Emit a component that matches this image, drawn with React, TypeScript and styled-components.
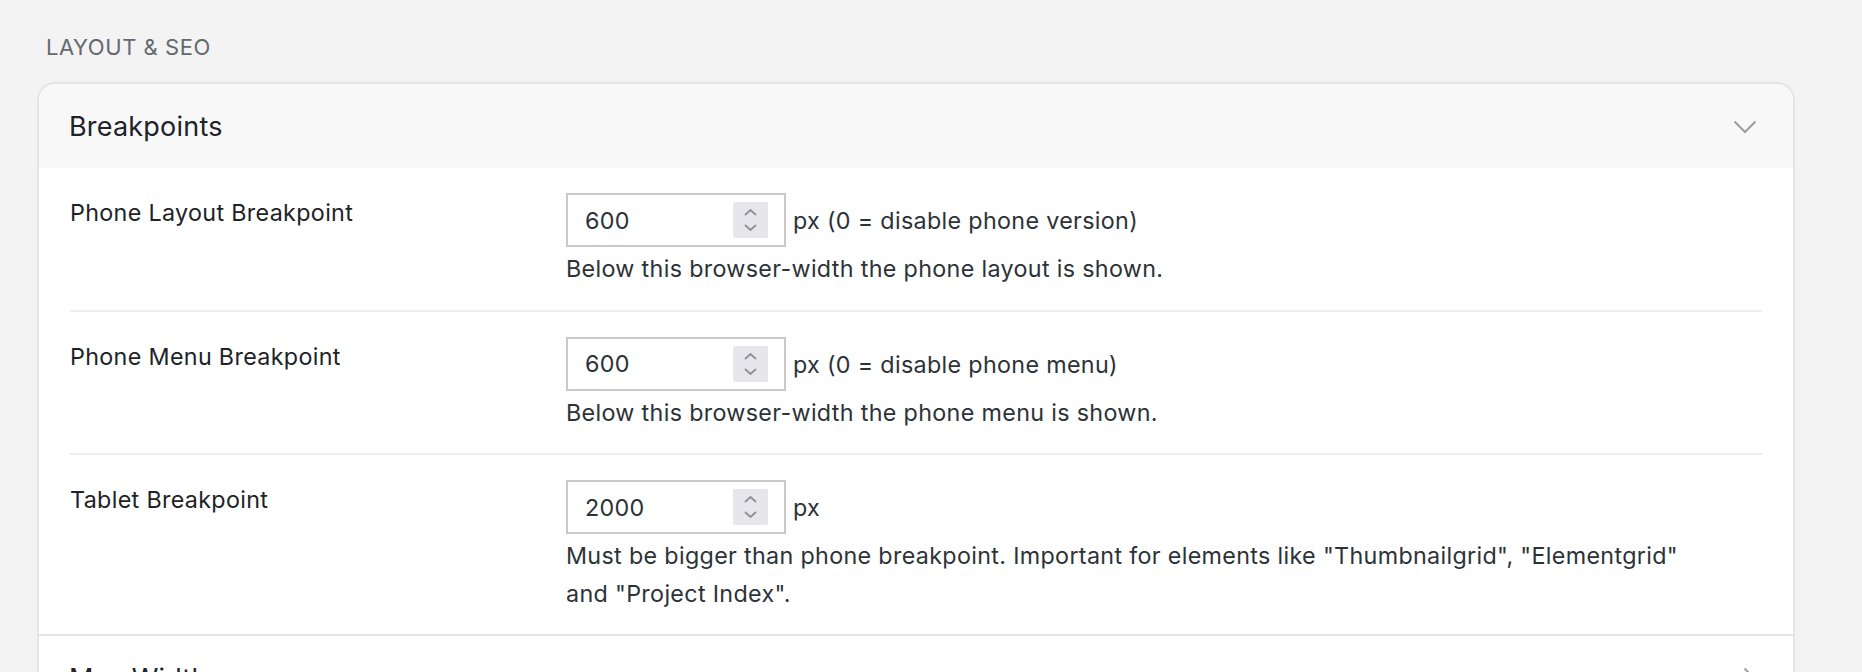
import React from "react";
import styled, { createGlobalStyle } from "styled-components";

const GlobalStyle = createGlobalStyle`
  html, body {
    margin: 0;
    padding: 0;
    background: #f3f3f3;
  }
  body {
    font-family: Inter, "Noto Sans", sans-serif;
    -webkit-font-smoothing: antialiased;
  }
`;

const Page = styled.div`
  box-sizing: border-box;
  height: 672px;
  overflow: hidden;
  padding: 36px 67px 0 37px;
`;

const SectionTitle = styled.h2`
  margin: 0 0 24px;
  padding-left: 9px;
  font-size: 22px;
  line-height: 22px;
  font-weight: 400;
  letter-spacing: 0.55px;
  text-transform: uppercase;
  color: #646970;
`;

const Card = styled.div`
  background: #ffffff;
  border: 2px solid #e4e4e4;
  border-radius: 18px;
  overflow: hidden;
`;

const Item = styled.section`
  & + & {
    border-top: 2px solid #e4e4e4;
  }
`;

const Header = styled.div<{ $open: boolean }>`
  display: flex;
  align-items: center;
  justify-content: space-between;
  height: 84px;
  padding: 1px 36px 0 30px;
  box-sizing: border-box;
  background: ${(p) => (p.$open ? "#f8f8f8" : "#ffffff")};
  cursor: pointer;
`;

const HeaderTitle = styled.h3`
  margin: 0;
  font-size: 27px;
  font-weight: 400;
  letter-spacing: 0.2px;
  color: #1d2327;
`;

const Body = styled.div`
  padding: 0 31px;
`;

const Row = styled.div`
  display: grid;
  grid-template-columns: 496px 1fr;
  padding: 25px 0 22px;
  border-bottom: 2px solid #eeeeee;
  &:last-child {
    border-bottom: none;
  }
`;

const Label = styled.div`
  padding-top: 1px;
  font-size: 23.3px;
  line-height: 37.5px;
  letter-spacing: 0.33px;
  color: #1d2327;
`;

const Field = styled.div`
  display: flex;
  flex-direction: column;
`;

const InputLine = styled.div`
  display: flex;
  align-items: center;
  gap: 7px;
`;

const InputBox = styled.label`
  box-sizing: border-box;
  width: 220px;
  height: 54px;
  display: flex;
  align-items: center;
  padding: 0 16px 0 17px;
  border: 2px solid #c9c9c9;
  background: #ffffff;
`;

const NumberInput = styled.input`
  flex: 1;
  min-width: 0;
  border: none;
  outline: none;
  padding: 0;
  background: transparent;
  font-family: inherit;
  font-size: 23.3px;
  letter-spacing: 0.33px;
  color: #2c3338;
  -moz-appearance: textfield;
  &::-webkit-inner-spin-button,
  &::-webkit-outer-spin-button {
    -webkit-appearance: none;
    margin: 0;
  }
`;

const Spinner = styled.span`
  width: 35px;
  height: 36px;
  display: flex;
  flex-direction: column;
  align-items: center;
  justify-content: center;
  gap: 8px;
  background: #e7e6eb;
  border-radius: 2px;
  color: #8f8d9a;
`;

const Unit = styled.span`
  padding-top: 2px;
  font-size: 23.3px;
  line-height: 37.5px;
  letter-spacing: 0.33px;
  color: #2c3338;
`;

const Description = styled.p`
  margin: 3px 0 0;
  max-width: 1140px;
  font-size: 23.3px;
  line-height: 37.5px;
  letter-spacing: 0.33px;
  color: #2c3338;
`;

const Chevron = ({ dir }: { dir: "down" | "right" }) =>
  dir === "down" ? (
    <svg width="24" height="14" viewBox="0 0 24 14" fill="none">
      <path d="M1.5 1.5 L12 12 L22.5 1.5" stroke="#9d9d9d" strokeWidth="2" />
    </svg>
  ) : (
    <svg width="14" height="24" viewBox="0 0 14 24" fill="none">
      <path d="M1.5 1.5 L12 12 L1.5 22.5" stroke="#9d9d9d" strokeWidth="2" />
    </svg>
  );

const SpinArrow = ({ up }: { up?: boolean }) => (
  <svg width="13" height="7" viewBox="0 0 13 7" fill="none">
    <path
      d={up ? "M1 6 L6.5 1 L12 6" : "M1 1 L6.5 6 L12 1"}
      stroke="currentColor"
      strokeWidth="1.8"
    />
  </svg>
);

type Setting = {
  label: string;
  value: number;
  unit: string;
  help: string;
};

const settings: Setting[] = [
  {
    label: "Phone Layout Breakpoint",
    value: 600,
    unit: "px (0 = disable phone version)",
    help: "Below this browser-width the phone layout is shown.",
  },
  {
    label: "Phone Menu Breakpoint",
    value: 600,
    unit: "px (0 = disable phone menu)",
    help: "Below this browser-width the phone menu is shown.",
  },
  {
    label: "Tablet Breakpoint",
    value: 2000,
    unit: "px",
    help:
      'Must be bigger than phone breakpoint. Important for elements like "Thumbnailgrid", "Elementgrid" and "Project Index".',
  },
];

const SettingRow = ({ s }: { s: Setting }) => (
  <Row>
    <Label>{s.label}</Label>
    <Field>
      <InputLine>
        <InputBox>
          <NumberInput type="number" defaultValue={s.value} />
          <Spinner>
            <SpinArrow up />
            <SpinArrow />
          </Spinner>
        </InputBox>
        <Unit>{s.unit}</Unit>
      </InputLine>
      <Description>{s.help}</Description>
    </Field>
  </Row>
);

export default function App() {
  return (
    <>
      <GlobalStyle />
      <Page>
        <SectionTitle>Layout &amp; SEO</SectionTitle>
        <Card>
          <Item>
            <Header $open>
              <HeaderTitle>Breakpoints</HeaderTitle>
              <Chevron dir="down" />
            </Header>
            <Body>
              {settings.map((s) => (
                <SettingRow key={s.label} s={s} />
              ))}
            </Body>
          </Item>
          <Item>
            <Header $open={false}>
              <HeaderTitle>Max Width</HeaderTitle>
              <Chevron dir="right" />
            </Header>
          </Item>
        </Card>
      </Page>
    </>
  );
}
